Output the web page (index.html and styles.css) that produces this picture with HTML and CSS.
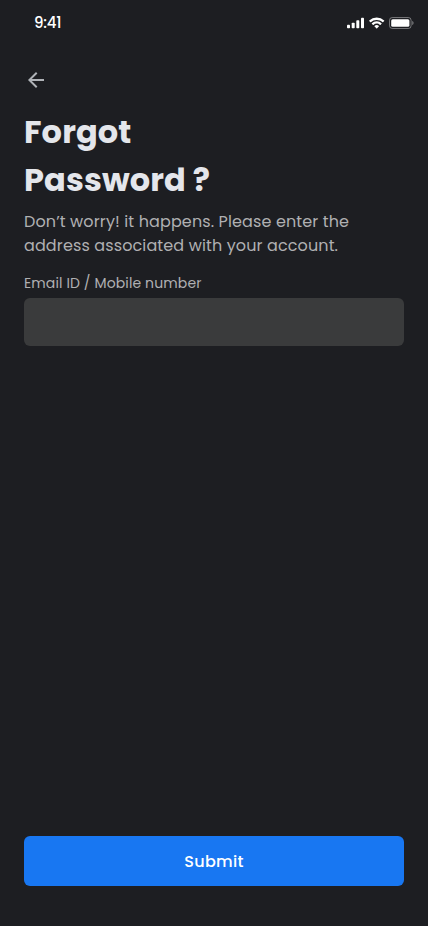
FILE: index.html
```html
<!DOCTYPE html>
<html lang="en">
<head>
<meta charset="utf-8">
<meta name="viewport" content="width=device-width, initial-scale=1">
<title>Forgot Password</title>
<link rel="stylesheet" href="styles.css">
</head>
<body>
<div class="screen">
  <header class="status-bar">
    <span class="time">9:41</span>
    <svg class="status-icons" width="68" height="14" viewBox="0 0 68 14" aria-hidden="true">
      <g fill="#fff">
        <rect x="1" y="8.7" width="3" height="3.6" rx=".8"/>
        <rect x="5.7" y="6.8" width="3" height="5.5" rx=".8"/>
        <rect x="10.3" y="4.3" width="3" height="8" rx=".8"/>
        <rect x="15" y="1.7" width="3" height="10.6" rx=".8"/>
        <path d="M30.7 3.9c2.2 0 4.3.8 5.9 2.3.1.1.3.1.4 0l1.2-1.2c.1-.1.1-.3 0-.4a10.9 10.9 0 0 0-15 0c-.1.1-.1.3 0 .4L24.4 6.2c.1.1.3.1.4 0a8.6 8.6 0 0 1 5.9-2.3Zm0 3.7c1.2 0 2.4.5 3.2 1.3.2.1.3.1.5 0L35.6 7.7c.1-.1.1-.3 0-.5a7.1 7.1 0 0 0-9.8 0c-.1.2-.1.4 0 .5L27 8.9c.2.1.3.1.5 0a4.7 4.7 0 0 1 3.2-1.3Zm2.3 2.7c.1-.1.1-.3 0-.4a3.6 3.6 0 0 0-4.6 0c-.1.1-.1.3 0 .4l2.1 2.1c.1.1.3.1.4 0Z"/>
        <rect x="45.2" y="3.2" width="18.2" height="7.6" rx="1.5"/>
      </g>
      <rect x="43.5" y="1.5" width="21.6" height="11" rx="2.8" fill="none" stroke="#fff" stroke-opacity=".38"/>
      <path d="M66.2 5.1v3.9c.9-.3 1.4-1.1 1.4-1.95s-.5-1.6-1.4-1.95Z" fill="#fff" fill-opacity=".4"/>
    </svg>
  </header>
  <main class="content">
    <a class="back" href="#" aria-label="Back">
      <svg width="24" height="24" viewBox="0 0 24 24"><path d="M20 11H7.83l5.59-5.59L12 4l-8 8 8 8 1.41-1.41L7.83 13H20v-2Z" fill="#b0b3b8"/></svg>
    </a>
    <h1 class="title">Forgot<br>Password ?</h1>
    <p class="message">Don’t worry! it happens. Please enter the<br>address associated with your account.</p>
    <form class="form">
      <label class="label" for="account">Email ID / Mobile number</label>
      <input class="field" id="account" type="text">
      <button class="submit" type="button">Submit</button>
    </form>
  </main>
</div>
</body>
</html>
```
FILE: styles.css
```css
* { box-sizing: border-box; }

body {
  margin: 0;
  background: #1d1e22;
  color: #b0b0b2;
  font-family: Poppins, Inter, sans-serif;
  font-feature-settings: "cv11" 1;
  letter-spacing: 0.12px;
}

.screen {
  display: flex;
  flex-direction: column;
  height: 926px;
}

.status-bar {
  display: flex;
  justify-content: space-between;
  align-items: center;
  height: 44px;
  padding: 2px 14px 0 34px;
}

.time {
  color: #fff;
  font-size: 15px;
  font-weight: 500;
  line-height: 20px;
  letter-spacing: -0.2px;
}

.status-icons { display: block; }

.content {
  display: flex;
  flex: 1;
  flex-direction: column;
  padding: 24px 24px 40px;
}

.back, .back svg { display: block; width: 24px; height: 24px; }

.title {
  margin: 16px 0 0;
  color: #e4e6eb;
  font-size: 32px;
  font-weight: 700;
  line-height: 48px;
}

.message {
  margin: 6px 0 0;
  font-size: 16px;
  line-height: 24px;
  white-space: nowrap;
}

.form {
  display: flex;
  flex: 1;
  flex-direction: column;
}

.label {
  align-self: flex-start;
  margin-top: 15px;
  font-size: 14px;
  line-height: 21px;
}

.field {
  height: 48px;
  margin-top: 4px;
  padding: 0 16px;
  border: 0;
  border-radius: 6px;
  background: #3a3b3c;
  color: #e4e6eb;
  font: inherit;
}

.submit {
  height: 50px;
  margin-top: auto;
  border: 0;
  border-radius: 6px;
  background: #1877f2;
  color: #fff;
  font: inherit;
  font-weight: 500;
  letter-spacing: 0.3px;
}
```
